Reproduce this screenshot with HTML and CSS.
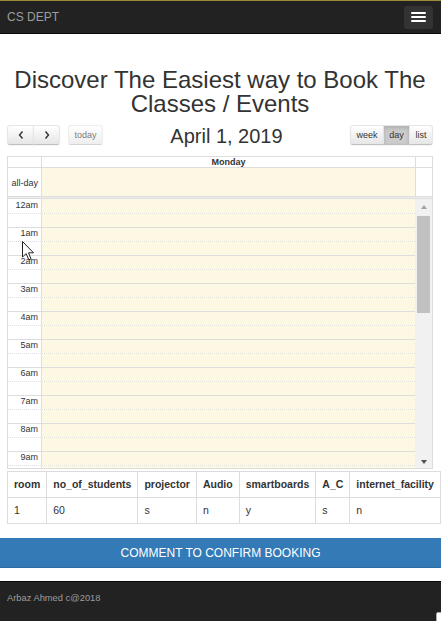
FILE: index.html
```html
<!DOCTYPE html>
<html lang="en">
<head>
<meta charset="utf-8">
<title>CS DEPT - Booking</title>
<link rel="stylesheet" href="styles.css">
</head>
<body>
<header class="navbar">
  <span class="brand">CS DEPT</span>
  <button class="toggle" aria-label="Toggle navigation"><span class="bar"></span><span class="bar"></span><span class="bar"></span></button>
</header>

<main class="content">
  <h1 class="title">Discover The Easiest way to Book The Classes / Events</h1>

  <div class="calendar">
    <div class="toolbar">
      <div class="left">
        <div class="btn-group">
          <button class="btn btn-icon"><svg width="6" height="8" viewBox="0 0 6 8"><polyline points="4.5,0.5 1.5,4 4.5,7.5" fill="none" stroke="#333" stroke-width="1.4"/></svg></button>
          <button class="btn btn-icon"><svg width="6" height="8" viewBox="0 0 6 8"><polyline points="1.5,0.5 4.5,4 1.5,7.5" fill="none" stroke="#333" stroke-width="1.4"/></svg></button>
        </div>
        <button class="btn btn-disabled">today</button>
      </div>
      <h2 class="date">April 1, 2019</h2>
      <div class="btn-group">
        <button class="btn">week</button>
        <button class="btn btn-active">day</button>
        <button class="btn">list</button>
      </div>
    </div>

    <div class="grid">
      <div class="row head">
        <div class="axis"></div>
        <div class="day day-head">Monday</div>
        <div class="gutter"></div>
      </div>
      <div class="row allday">
        <div class="axis axis-label">all-day</div>
        <div class="day day-today"></div>
        <div class="gutter"></div>
      </div>
      <div class="divider"></div>
      <div class="scroller">
        <div class="slots">
          <div class="slot hour first"><div class="axis slot-label">12am</div><div class="day day-today"></div></div>
          <div class="slot half"><div class="axis"></div><div class="day day-today"></div></div>
          <div class="slot hour"><div class="axis slot-label">1am</div><div class="day day-today"></div></div>
          <div class="slot half"><div class="axis"></div><div class="day day-today"></div></div>
          <div class="slot hour"><div class="axis slot-label">2am</div><div class="day day-today"></div></div>
          <div class="slot half"><div class="axis"></div><div class="day day-today"></div></div>
          <div class="slot hour"><div class="axis slot-label">3am</div><div class="day day-today"></div></div>
          <div class="slot half"><div class="axis"></div><div class="day day-today"></div></div>
          <div class="slot hour"><div class="axis slot-label">4am</div><div class="day day-today"></div></div>
          <div class="slot half"><div class="axis"></div><div class="day day-today"></div></div>
          <div class="slot hour"><div class="axis slot-label">5am</div><div class="day day-today"></div></div>
          <div class="slot half"><div class="axis"></div><div class="day day-today"></div></div>
          <div class="slot hour"><div class="axis slot-label">6am</div><div class="day day-today"></div></div>
          <div class="slot half"><div class="axis"></div><div class="day day-today"></div></div>
          <div class="slot hour"><div class="axis slot-label">7am</div><div class="day day-today"></div></div>
          <div class="slot half"><div class="axis"></div><div class="day day-today"></div></div>
          <div class="slot hour"><div class="axis slot-label">8am</div><div class="day day-today"></div></div>
          <div class="slot half"><div class="axis"></div><div class="day day-today"></div></div>
          <div class="slot hour"><div class="axis slot-label">9am</div><div class="day day-today"></div></div>
          <div class="slot half"><div class="axis"></div><div class="day day-today"></div></div>
        </div>
        <div class="scrollbar">
          <div class="sb-btn"><span class="arrow-up"></span></div>
          <div class="sb-track"><div class="sb-thumb"></div></div>
          <div class="sb-btn"><span class="arrow-down"></span></div>
        </div>
      </div>
    </div>
  </div>

  <table class="rooms">
    <thead>
      <tr><th>room</th><th>no_of_students</th><th>projector</th><th>Audio</th><th>smartboards</th><th>A_C</th><th>internet_facility</th></tr>
    </thead>
    <tbody>
      <tr><td>1</td><td>60</td><td>s</td><td>n</td><td>y</td><td>s</td><td>n</td></tr>
    </tbody>
  </table>
</main>

<button class="cta">COMMENT TO CONFIRM BOOKING</button>

<footer class="footer">Arbaz Ahmed c@2018</footer>

<svg class="cursor" width="13" height="20" viewBox="0 0 13 20"><path d="M0.5,0.5 L0.5,16 L4.2,12.6 L6.8,18.8 L9,17.9 L6.5,11.8 L11.5,11.8 Z" fill="#fff" stroke="#222" stroke-width="1" stroke-linejoin="round"/></svg>
<div class="corner"></div>
</body>
</html>
```
FILE: styles.css
```css
* { box-sizing: border-box; }
html, body { margin: 0; padding: 0; }
body {
  font-family: "Liberation Sans", Arial, sans-serif;
  color: #333;
  background: #fff;
  width: 441px;
  height: 621px;
  overflow: hidden;
  position: relative;
}

/* navbar */
.navbar {
  height: 34px;
  background: #222;
  border-top: 1px solid #9a8a3a;
  border-bottom: 1px solid #080808;
  display: flex;
  align-items: center;
  justify-content: space-between;
  padding: 0 8px 0 7px;
}
.brand { font-size: 12px; color: #9d9d9d; }
.toggle {
  width: 29px;
  height: 23px;
  background: #333;
  border: 0;
  border-radius: 3px;
  padding: 0;
  display: flex;
  flex-direction: column;
  align-items: center;
  justify-content: center;
  gap: 2px;
}
.bar { display: block; width: 15px; height: 2px; background: #fff; border-radius: 1px; }

/* content */
.content { padding: 0 8px 0 7px; }
.title {
  font-size: 24px;
  line-height: 24px;
  font-weight: 400;
  text-align: center;
  margin: 34px 0 0;
  color: #333;
}

/* toolbar */
.toolbar {
  display: flex;
  align-items: flex-start;
  height: 24px;
  margin: 9px 0 7px;
}
.left { display: flex; gap: 8px; }
.btn-group { display: flex; }
.btn-group .btn + .btn { margin-left: -1px; }
.btn {
  height: 20px;
  padding: 0 5.4px;
  font: 9px "Liberation Sans", Arial, sans-serif;
  color: #333;
  border: 1px solid;
  border-color: #e6e6e6 #e6e6e6 #bfbfbf;
  background: linear-gradient(#fff, #e6e6e6);
  box-shadow: inset 0 1px 0 rgba(255,255,255,.2), 0 1px 2px rgba(0,0,0,.05);
  display: flex;
  align-items: center;
  justify-content: center;
}
.btn-group .btn:first-child { border-radius: 3px 0 0 3px; }
.btn-group .btn:last-child { border-radius: 0 3px 3px 0; }
.btn-icon { width: 27px; }
.btn-disabled { border-radius: 3px; opacity: .65; box-shadow: none; }
.btn-active {
  background: #cccccc;
  box-shadow: inset 0 2px 4px rgba(0,0,0,.15), 0 1px 2px rgba(0,0,0,.05);
}
.date {
  flex: 1;
  margin: 0;
  font-size: 20px;
  line-height: 23px;
  font-weight: 400;
  text-align: center;
  color: #333;
}

/* grid */
.grid { border: 1px solid #ddd; font-size: 9px; }
.row { display: flex; }
.axis { width: 34px; flex: none; border-right: 1px solid #ddd; }
.day { flex: 1; }
.gutter { width: 17px; flex: none; border-left: 1px solid #ddd; }
.head { height: 11px; border-bottom: 1px solid #ddd; }
.day-head { font-weight: 700; text-align: center; line-height: 10px; }
.allday { height: 28px; }
.axis-label {
  text-align: right;
  padding-right: 3px;
  display: flex;
  align-items: center;
  justify-content: flex-end;
}
.allday .axis-label { padding-top: 1px; }
.slot-label {
  text-align: right;
  padding-right: 3px;
  line-height: 11px;
}
.day-today { background: #fcf8e3; }
.divider {
  height: 3px;
  border-top: 1px solid #ddd;
  border-bottom: 1px solid #ddd;
  background: #eee;
}
.scroller { display: flex; height: 269px; overflow: hidden; }
.slots { flex: 1; display: flex; flex-direction: column; }
.slot { display: flex; height: 14px; flex: none; }
.slot.hour { border-top: 1px solid #ddd; }
.slot.half { border-top: 1px dotted #ddd; }
.slot.first { border-top: 0; }
.slot.first .slot-label { padding-top: 1px; }

.scrollbar {
  width: 17px;
  flex: none;
  background: #f1f1f1;
  display: flex;
  flex-direction: column;
}
.sb-btn { height: 17px; flex: none; display: flex; align-items: center; justify-content: center; }
.sb-track { flex: 1; padding: 0 2px; }
.sb-thumb { height: 97px; background: #c1c1c1; }
.arrow-up {
  width: 0; height: 0;
  border-left: 3.5px solid transparent;
  border-right: 3.5px solid transparent;
  border-bottom: 4px solid #a3a3a3;
  margin-top: -2px;
}
.arrow-down {
  width: 0; height: 0;
  border-left: 3.5px solid transparent;
  border-right: 3.5px solid transparent;
  border-top: 4px solid #505050;
  margin-top: 4px;
}

/* room table */
.rooms {
  border-collapse: collapse;
  margin-top: 2px;
  font-size: 10.5px;
  color: #333;
}
.rooms th, .rooms td {
  border: 1px solid #ddd;
  padding: 6px 6px;
  line-height: 13px;
  text-align: left;
  white-space: nowrap;
}
.rooms th { font-weight: 700; }

/* call to action */
.cta {
  display: block;
  width: 100%;
  height: 30px;
  margin-top: 14px;
  background: #337ab7;
  border: 0;
  border-bottom: 1px solid #2e6da4;
  color: #fff;
  font: 12px "Liberation Sans", Arial, sans-serif;
  text-align: center;
  padding: 0;
}

/* footer */
.footer {
  margin-top: 13px;
  height: 60px;
  background: #222;
  border-top: 1px solid #080808;
  color: #9d9d9d;
  font-size: 9.33px;
  line-height: 11px;
  padding: 11px 7px 0;
}

/* overlays */
.cursor { position: absolute; left: 22px; top: 241px; }
.corner {
  position: absolute;
  left: 436px;
  top: 612px;
  width: 8px;
  height: 12px;
  background: #fff;
  border: 1px solid #aaa;
  border-radius: 2px 0 0 0;
}
```
